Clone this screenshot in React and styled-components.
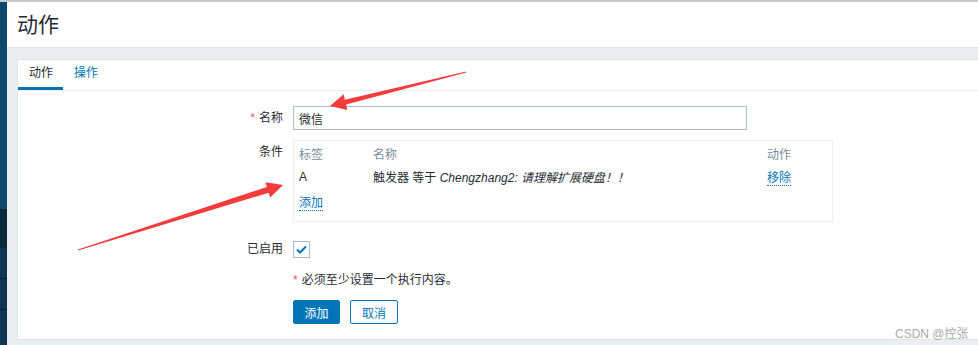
import React from "react";
import styled, { createGlobalStyle } from "styled-components";

const GlobalStyle = createGlobalStyle`
  html, body, #root {
    margin: 0;
    height: 100%;
  }
  body {
    font-family: "Liberation Sans", "Noto Sans CJK SC", sans-serif;
    font-size: 12px;
    color: #1f2c33;
    background: #ebeef0;
  }
  * {
    box-sizing: border-box;
  }
`;

const Page = styled.div`
  position: relative;
  height: 100%;
  display: flex;
  flex-direction: column;
  border-top: 2px solid #c9c9c9;
  overflow: hidden;
`;

const Body = styled.div`
  flex: 1;
  display: flex;
`;

const Sidebar = styled.div`
  width: 7px;
  display: flex;
  flex-direction: column;
`;

const SideBlock = styled.div`
  height: ${(p) => p.$h || "auto"};
  flex: ${(p) => (p.$grow ? 1 : "none")};
  background: ${(p) => p.$bg};
  border-bottom: ${(p) => (p.$line ? "1px solid #06202f" : "none")};
`;

const Main = styled.div`
  flex: 1;
  display: flex;
  flex-direction: column;
`;

const Header = styled.header`
  height: 46px;
  background: #fff;
  border-bottom: 1px solid #dfe4e7;
  display: flex;
  align-items: center;
  padding: 0 0 3px 10px;
`;

const Title = styled.h1`
  margin: 0;
  font-family: "Noto Sans CJK SC", sans-serif;
  font-size: 21px;
  font-weight: 400;
  color: #1f2c33;
`;

const Content = styled.div`
  flex: 1;
  padding: 11px 0 7px 10px;
  background: #ebeef0;
`;

const Card = styled.section`
  background: #fff;
  border: 1px solid #dfe4e7;
  border-right: none;
`;

const Tabs = styled.nav`
  display: flex;
  height: 31px;
  border-bottom: 1px solid #ebeef0;
`;

const Tab = styled.a`
  padding: 0 10px 0 11px;
  line-height: 27px;
  height: 30px;
  border-bottom: 3px solid ${(p) => (p.$active ? "#0275b8" : "transparent")};
  color: ${(p) => (p.$active ? "#1f2c33" : "#0275b8")};
  text-decoration: none;
`;

const Form = styled.div`
  display: grid;
  grid-template-columns: 265px 1fr;
  column-gap: 10px;
  padding: 15px 0 15px;
`;

const Label = styled.div`
  text-align: right;
  line-height: ${(p) => p.$lh || "24px"};
  margin-top: ${(p) => p.$mt || "0"};
  align-self: ${(p) => (p.$top ? "start" : "center")};
`;

const Field = styled.div`
  margin-top: ${(p) => p.$mt || "0"};
  display: flex;
  align-items: center;
`;

const Star = styled.span`
  color: #e45959;
  margin-right: 4px;
`;

const TextInput = styled.input`
  width: 454px;
  height: 24px;
  border: 1px solid #acbbc2;
  padding: 0 5px;
  font-family: "Liberation Sans", "Noto Sans CJK SC", sans-serif;
  font-size: 12px;
  color: #1f2c33;
  outline: none;
`;

const CondBox = styled.div`
  width: 540px;
  border: 1px solid #ebeef0;
  padding: 0 5px 10px;
`;

const CondTable = styled.table`
  border-collapse: collapse;
  width: 100%;
`;

const Th = styled.th`
  text-align: left;
  font-weight: 400;
  color: #768d99;
  height: 24px;
  padding: 0;
  width: ${(p) => p.$w || "auto"};
`;

const Td = styled.td`
  height: 23px;
  padding: 0;
`;

const Italic = styled.i`
  font-style: italic;
`;

const LinkText = styled.a`
  color: #0275b8;
  text-decoration: none;
  border-bottom: 1px dotted #0275b8;
  cursor: pointer;
`;

const AddRow = styled.div`
  padding-top: 8px;
  line-height: 15px;
`;

const Check = styled.span`
  width: 17px;
  height: 17px;
  border: 1px solid #acbbc2;
  display: inline-flex;
  align-items: center;
  justify-content: center;
`;

const Note = styled.div`
  line-height: 16px;
`;

const Buttons = styled.div`
  display: flex;
  gap: 10px;
`;

const Button = styled.button`
  height: 24px;
  width: ${(p) => (p.$primary ? "47px" : "48px")};
  padding: 0;
  border: 1px solid #0275b8;
  border-radius: 2px;
  background: ${(p) => (p.$primary ? "#0275b8" : "#fff")};
  color: ${(p) => (p.$primary ? "#fff" : "#0275b8")};
  font-family: "Liberation Sans", "Noto Sans CJK SC", sans-serif;
  font-size: 12px;
  cursor: pointer;
`;

const Overlay = styled.svg`
  position: absolute;
  left: 0;
  top: 0;
  pointer-events: none;
`;

const Watermark = styled.div`
  position: absolute;
  left: 895px;
  top: 322px;
  font-size: 12px;
  color: #a9a9a9;
  font-family: "Liberation Sans", "Noto Sans CJK SC", sans-serif;
`;

export default function App() {
  return (
    <>
      <GlobalStyle />
      <Page>
        <Body>
          <Sidebar>
            <SideBlock $h="207px" $bg="#0b486c" />
            <SideBlock $h="39px" $bg="#0a2a3e" />
            <SideBlock $h="31px" $bg="#0e3652" $line />
            <SideBlock $h="31px" $bg="#0e3652" $line />
            <SideBlock $grow $bg="#0e3652" />
          </Sidebar>
          <Main>
            <Header>
              <Title>动作</Title>
            </Header>
            <Content>
              <Card>
                <Tabs>
                  <Tab $active>动作</Tab>
                  <Tab>操作</Tab>
                </Tabs>
                <Form>
                  <Label>
                    <Star>*</Star>名称
                  </Label>
                  <Field>
                    <TextInput defaultValue="微信" />
                  </Field>

                  <Label $top $mt="10px">条件</Label>
                  <Field $mt="10px">
                    <CondBox>
                      <CondTable>
                        <thead>
                          <tr>
                            <Th $w="74px">标签</Th>
                            <Th $w="394px">名称</Th>
                            <Th>动作</Th>
                          </tr>
                        </thead>
                        <tbody>
                          <tr>
                            <Td>A</Td>
                            <Td>
                              触发器 等于 <Italic>Chengzhang2: 请理解扩展硬盘！！</Italic>
                            </Td>
                            <Td>
                              <LinkText>移除</LinkText>
                            </Td>
                          </tr>
                        </tbody>
                      </CondTable>
                      <AddRow>
                        <LinkText>添加</LinkText>
                      </AddRow>
                    </CondBox>
                  </Field>

                  <Label $lh="17px" $mt="19px">已启用</Label>
                  <Field $mt="19px">
                    <Check>
                      <svg width="11" height="9" viewBox="0 0 11 9">
                        <path d="M1 4.5 L4 7.5 L10 1.5" fill="none" stroke="#0275b8" strokeWidth="2" />
                      </svg>
                    </Check>
                  </Field>

                  <div />
                  <Field $mt="14px">
                    <Note>
                      <Star>*</Star>必须至少设置一个执行内容。
                    </Note>
                  </Field>

                  <div />
                  <Field $mt="12px">
                    <Buttons>
                      <Button $primary>添加</Button>
                      <Button>取消</Button>
                    </Buttons>
                  </Field>
                </Form>
              </Card>
            </Content>
          </Main>
        </Body>
        <Overlay width="978" height="345" viewBox="0 0 978 345">
          <polygon
            fill="#f23b3b"
            points="466,69.4 344.9,97.7 343.6,92.3 330,104 347.4,107.9 346.1,102.5 466.2,70.6"
          />
          <polygon
            fill="#f23b3b"
            points="78,247.5 266.9,184.9 265.4,180.2 283,183 270.2,195.4 268.7,190.7 78.2,248.6"
          />
        </Overlay>
        <Watermark>CSDN @控张</Watermark>
      </Page>
    </>
  );
}
